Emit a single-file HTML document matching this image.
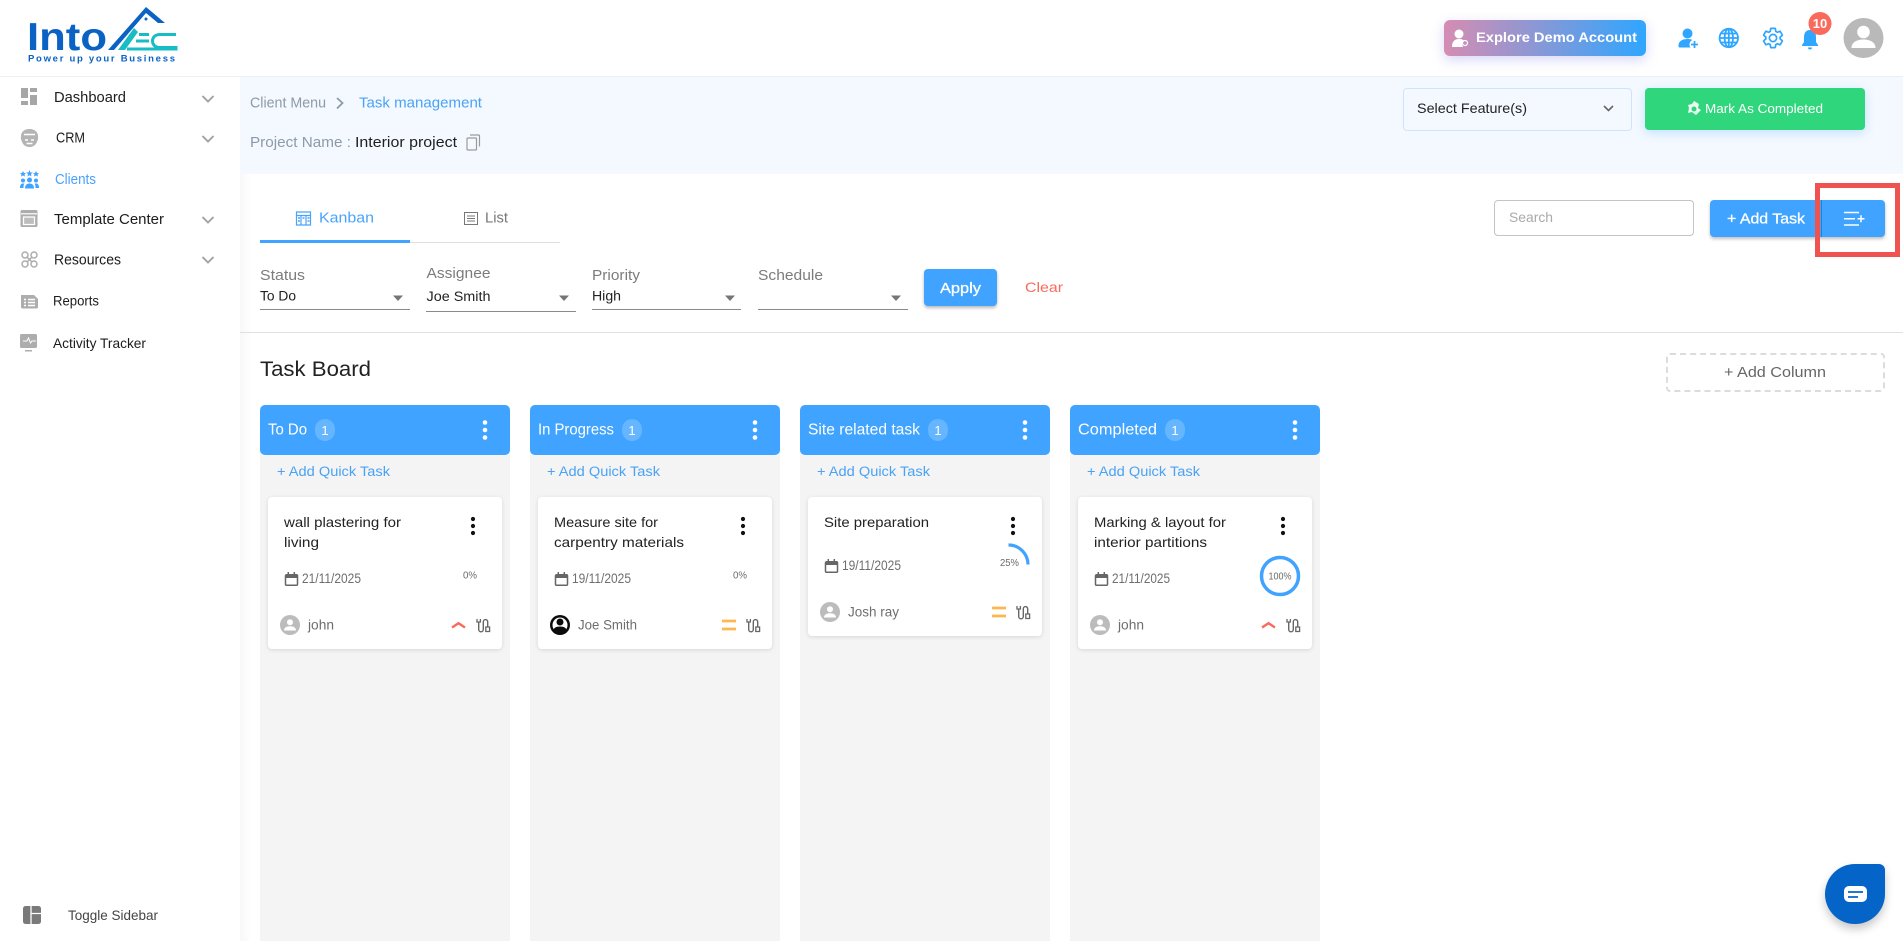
<!DOCTYPE html>
<html lang="en">
<head>
<meta charset="utf-8">
<title>Task management</title>
<style>
html,body{margin:0;padding:0;width:1903px;height:941px;overflow:hidden;background:#fff;font-family:"Liberation Sans",sans-serif}
.b{position:absolute;box-sizing:border-box}
svg.o{position:absolute;left:0;top:0}
text{font-family:"Liberation Sans",sans-serif}
.m{font-size:15px;fill:#1c1c1c}
.lb{font-size:14.5px;fill:#7c7c7c}
.v{font-size:13.5px;fill:#222}
.h{font-size:15.5px;fill:#fff}
.q{font-size:13.5px;fill:#4aa2f5}
.t{font-size:14px;fill:#222}
.d{font-size:13.5px;fill:#6e6e6e}
.n{font-size:13.5px;fill:#6e6e6e}
.p{font-size:10px;fill:#6a6a6a}
</style>
</head>
<body>
<div class="b" style="left:0;top:76px;width:1903px;height:1px;background:#ecf0f4"></div>
<div class="b" style="left:240px;top:77px;width:1663px;height:97px;background:#f4f9ff"></div>
<div class="b" style="left:240px;top:174px;width:12px;height:767px;background:linear-gradient(90deg,#f8f8f8,#fff)"></div>

<div class="b" style="left:1444px;top:20px;width:202px;height:36px;border-radius:6px;background:linear-gradient(90deg,#d68cb2,#2fa6ff);box-shadow:0 4px 12px rgba(110,110,230,.28)"></div>
<div class="b" style="left:1403px;top:88px;width:229px;height:43px;border:1px solid #cfe3fa;border-radius:4px"></div>
<div class="b" style="left:1645px;top:88px;width:220px;height:42px;border-radius:4px;background:#2fd67c;box-shadow:0 3px 10px rgba(80,170,255,.3)"></div>

<div class="b" style="left:1494px;top:200px;width:200px;height:36px;border:1px solid #c4c4c4;border-radius:4px;background:#fff"></div>
<div class="b" style="left:1710px;top:200px;width:175px;height:37px;border-radius:4px;background:#3fa3ff;box-shadow:0 2px 3px rgba(0,0,0,.25)"></div>
<div class="b" style="left:1821px;top:200px;width:1px;height:37px;background:#2f7fd0"></div>
<div class="b" style="left:1815px;top:183px;width:85px;height:74px;border:5px solid #ef5350"></div>

<div class="b" style="left:260px;top:240px;width:150px;height:2.5px;background:#3fa3ff"></div>
<div class="b" style="left:410px;top:241.5px;width:150px;height:1px;background:#e0e0e0"></div>
<div class="b" style="left:260px;top:309px;width:150px;height:1px;background:#8a8a8a"></div>
<div class="b" style="left:426px;top:311px;width:150px;height:1px;background:#8a8a8a"></div>
<div class="b" style="left:592px;top:309px;width:149px;height:1px;background:#8a8a8a"></div>
<div class="b" style="left:758px;top:309px;width:150px;height:1px;background:#8a8a8a"></div>
<div class="b" style="left:924px;top:269px;width:73px;height:37px;border-radius:4px;background:#3fa3ff;box-shadow:0 2px 3px rgba(0,0,0,.28)"></div>
<div class="b" style="left:240px;top:332px;width:1663px;height:1px;background:#e0e0e0"></div>
<div class="b" style="left:1666px;top:353px;width:219px;height:39px;border:2px dashed #dcdcdc;border-radius:4px"></div>

<div class="b" style="left:260px;top:450px;width:250px;height:491px;background:#f4f4f4"></div>
<div class="b" style="left:530px;top:450px;width:250px;height:491px;background:#f4f4f4"></div>
<div class="b" style="left:800px;top:450px;width:250px;height:491px;background:#f4f4f4"></div>
<div class="b" style="left:1070px;top:450px;width:250px;height:491px;background:#f4f4f4"></div>
<div class="b" style="left:260px;top:405px;width:250px;height:50px;background:#3fa3ff;border-radius:5px"></div>
<div class="b" style="left:530px;top:405px;width:250px;height:50px;background:#3fa3ff;border-radius:5px"></div>
<div class="b" style="left:800px;top:405px;width:250px;height:50px;background:#3fa3ff;border-radius:5px"></div>
<div class="b" style="left:1070px;top:405px;width:250px;height:50px;background:#3fa3ff;border-radius:5px"></div>

<div class="b" style="left:268px;top:497px;width:234px;height:152px;background:#fff;border-radius:4px;box-shadow:0 1px 4px rgba(0,0,0,.12)"></div>
<div class="b" style="left:538px;top:497px;width:234px;height:152px;background:#fff;border-radius:4px;box-shadow:0 1px 4px rgba(0,0,0,.12)"></div>
<div class="b" style="left:808px;top:497px;width:234px;height:139px;background:#fff;border-radius:4px;box-shadow:0 1px 4px rgba(0,0,0,.12)"></div>
<div class="b" style="left:1078px;top:497px;width:234px;height:152px;background:#fff;border-radius:4px;box-shadow:0 1px 4px rgba(0,0,0,.12)"></div>

<div class="b" style="left:1825px;top:864px;width:60px;height:60px;background:#0464c8;border-radius:30px 6px 30px 30px;box-shadow:0 5px 9px rgba(0,0,0,.22)"></div>

<svg class="o" width="1903" height="941" viewBox="0 0 1903 941" xmlns="http://www.w3.org/2000/svg">
<defs>
<g id="chev"><path d="M-5.500-3 0 2.500 5.500-3" fill="none" stroke="#a2a2a2" stroke-width="1.900"/></g>
<g id="tri"><path d="M-5-2.500H5L0 3z" fill="#757575"/></g>
<g id="kdots"><circle cy="-7" r="2.100" fill="#111"/><circle cy="0" r="2.100" fill="#111"/><circle cy="7" r="2.100" fill="#111"/></g>
<g id="wdots"><circle cy="-7.500" r="2.300" fill="#fff"/><circle cy="0" r="2.300" fill="#fff"/><circle cy="7.500" r="2.300" fill="#fff"/></g>
<g id="cal"><path d="M1 2.500h10a1 1 0 0 1 1 1v8.500a1 1 0 0 1-1 1H1a1 1 0 0 1-1-1V3.500a1 1 0 0 1 1-1z" transform="translate(.5,.3)" fill="none" stroke="#666" stroke-width="1.500"/><path d="M.5 3h11.500v3H.5z" fill="#666"/><path d="M3.300 0v3M9.300 0v3" stroke="#666" stroke-width="1.500"/></g>
<g id="av"><circle r="10" fill="#bcbcbc"/><circle cy="-2.800" r="3" fill="#fff"/><path d="M-6 5.500c0-3 3-4.200 6-4.200s6 1.200 6 4.200z" fill="#fff"/></g>
<g id="up"><path d="M-6.500 2.500 0-1.800 6.500 2.500" fill="none" stroke="#f96a5c" stroke-width="2.400"/></g>
<g id="eq"><path d="M-7-4H7M-7 4H7" stroke="#ffb74d" stroke-width="2.700"/></g>
<g id="sw"><path d="M2.200 3v7.500a2.300 2.300 0 0 0 4.600 0V2.800a2.200 2.200 0 0 1 4.400 0V8" fill="none" stroke="#666" stroke-width="1.400"/><path d="M.5 0v3h3.400V0M9.300 8h3.800v4.500H9.300z" fill="none" stroke="#666" stroke-width="1.300"/></g>
</defs>

<!-- logo -->
<text x="27" y="50" textLength="80" lengthAdjust="spacingAndGlyphs" font-size="39" font-weight="700" fill="#0a62c4">Into</text>
<path d="M108 50 146 7l19 16h-7L146 13l-32 37z" fill="#0a62c4"/>
<path d="M118 50l16-22 4 4-13 18z" fill="#18bcc4"/>
<g fill="none" stroke="#18bcc4" stroke-width="3"><path d="M176 34.500H160c-5 0-7.500 3-7.500 6.500s2.500 6.500 7.500 6.500h16V49H127"/><path d="M136 41h13M139 34.500h10"/></g>
<circle cx="146" cy="19" r="1.500" fill="#0a62c4"/>
<text x="28" y="61.500" textLength="147" lengthAdjust="spacing" font-size="9.500" font-weight="700" fill="#0a62c4">Power up your Business</text>

<!-- side menu -->
<g fill="#a6a6a6">
<path d="M21 88h7v10h-7zM21 101h7v4h-7zM30 88h7v4h-7zM30 95h7v10h-7z"/>
</g>
<!-- CRM face -->
<path d="M29.500 129c-5 0-8.500 3-8.500 7 0 1.500-.5 3 .5 4.500 1 3.500 3.500 6.500 8 6.500s7-3 8-6.500c1-1.500.5-3 .5-4.500 0-4-3.500-7-8.500-7z" fill="#b4b4b4"/>
<path d="M24 134.500h11M25 140h3M31 140h3M26.500 143.500h6" stroke="#fff" stroke-width="1.400" fill="none"/>
<g fill="#3fa3ff">
<path d="M23 171l1 2h2l-1.500 1.500.5 2-2-1-2 1 .5-2L20 173h2zM29.500 170l1 2.500h2.500l-2 1.500.5 2.500-2-1.300-2 1.300.5-2.500-2-1.500h2.500zM36 171l1 2h2l-1.500 1.500.5 2-2-1-2 1 .5-2L33 173h2z"/>
<circle cx="23" cy="180.500" r="2"/><circle cx="29.500" cy="180" r="2.500"/><circle cx="36" cy="180.500" r="2"/>
<path d="M20 188c0-3 1-4.500 3-4.500h1.500c-1 1-1 3-1 4.500zM39 188c0-3-1-4.500-3-4.500h-1.500c1 1 1 3 1 4.500zM25 188.500c0-3 1.500-5 4.500-5s4.500 2 4.500 5z"/>
</g>
<g fill="#adadad">
<rect x="20.500" y="210" width="17" height="17" rx="1.500"/>
<path d="M21 295h13l4 4v8a1.500 1.500 0 0 1-1.500 1.500H22.500A1.500 1.500 0 0 1 21 307z"/>
<rect x="20" y="334" width="17" height="14" rx="1.500"/>
<rect x="25" y="350" width="7" height="1.500"/>
</g>
<path d="M21 213.800h16" stroke="#fff" stroke-width="1.200"/>
<rect x="23.500" y="217" width="11" height="7.500" fill="#bdbdbd" stroke="#fff" stroke-width="1.300"/>
<path d="M24 300h2M28 300h7M24 303h2M28 303h7M24 306h2M28 306h7" stroke="#fff" stroke-width="1.500" transform="translate(0,-.5)"/>
<path d="M23 341h4l1.500-3 2 5 1.500-2h4" fill="none" stroke="#fff" stroke-width="1"/>
<g fill="none" stroke="#adadad" stroke-width="1.500">
<circle cx="25" cy="255" r="3"/><circle cx="34" cy="255" r="3"/><circle cx="25" cy="264" r="3"/><circle cx="34" cy="264" r="3"/>
<path d="M27 257l5 5M32 257l-5 5"/>
</g>

<text class="m" x="54" y="102" textLength="72" lengthAdjust="spacingAndGlyphs">Dashboard</text>
<text class="m" x="56" y="142.500" textLength="29" lengthAdjust="spacingAndGlyphs">CRM</text>
<text class="m" x="55" y="184" textLength="41" lengthAdjust="spacingAndGlyphs" style="fill:#4aa3fb">Clients</text>
<text class="m" x="54" y="224" textLength="110" lengthAdjust="spacingAndGlyphs">Template Center</text>
<text class="m" x="54" y="264.500" textLength="67" lengthAdjust="spacingAndGlyphs">Resources</text>
<text class="m" x="53" y="305.500" textLength="46" lengthAdjust="spacingAndGlyphs" style="font-size:14px">Reports</text>
<text class="m" x="53" y="348" textLength="93" lengthAdjust="spacingAndGlyphs" style="font-size:14px">Activity Tracker</text>
<use href="#chev" x="208" y="99"/><use href="#chev" x="208" y="139"/><use href="#chev" x="208" y="220"/><use href="#chev" x="208" y="260"/>

<rect x="23" y="906" width="18" height="18" rx="2.500" fill="#7a7a7a"/>
<path d="M31 906v18M31 913.500h10" stroke="#fff" stroke-width="1.300"/>
<text x="68" y="920" font-size="14" fill="#444" textLength="90" lengthAdjust="spacingAndGlyphs">Toggle Sidebar</text>

<!-- breadcrumb -->
<text x="250" y="107.500" font-size="14.500" fill="#8d9aa8" textLength="76" lengthAdjust="spacingAndGlyphs">Client Menu</text>
<path d="M337 98l5.500 5-5.500 5.500" fill="none" stroke="#8d9aa8" stroke-width="1.800"/>
<text x="359" y="107.500" font-size="14.500" fill="#4aa2f5" textLength="123" lengthAdjust="spacingAndGlyphs">Task management</text>
<text x="250" y="147" font-size="15" fill="#8d9aa8" textLength="101" lengthAdjust="spacingAndGlyphs">Project Name :</text>
<text x="355" y="147" font-size="15" fill="#1f1f1f" textLength="102" lengthAdjust="spacingAndGlyphs">Interior project</text>
<path d="M468 138h7.500a1 1 0 0 1 1 1v10a1 1 0 0 1-1 1H468a1 1 0 0 1-1-1v-10a1 1 0 0 1 1-1zM470 135h8.500a1 1 0 0 1 1 1v10.500" fill="none" stroke="#9a9a9a" stroke-width="1.200"/>

<!-- top right -->
<circle cx="1459" cy="34" r="4.500" fill="#fff"/><path d="M1452 47c0-6 3-8 7-8 3 0 4 .5 5 2l-2 3 1 3z" fill="#fff"/><circle cx="1465" cy="43" r="2.500" fill="none" stroke="#fff" stroke-width="1.200"/>
<text x="1476" y="42" font-size="13.500" font-weight="700" fill="#fff" textLength="161" lengthAdjust="spacingAndGlyphs">Explore Demo Account</text>

<circle cx="1687.500" cy="33.500" r="5" fill="#2fa6ff"/><path d="M1680 47.500c-1.500 0-1.500-1-1.500-2 0-4.500 4-6.500 9-6.500 2 0 3.500.3 5 1-2 .8-3 2.600-3 4.500 0 1 .3 2 1 3z" fill="#2fa6ff"/><path d="M1691 44.500h7M1694.500 41v7" stroke="#2fa6ff" stroke-width="1.800"/>
<g fill="none" stroke="#2fa6ff" stroke-width="1.800"><circle cx="1728.800" cy="38" r="9.200"/><ellipse cx="1728.800" cy="38" rx="4.200" ry="9.200"/><path d="M1719.500 38h18.600M1720.800 33.500h16M1720.800 42.500h16M1728.800 29v18"/></g>
<path transform="translate(1761,26)" fill="none" stroke="#2fa6ff" stroke-width="1.700" d="M19.140 12.940c.04-.3.06-.61.06-.94 0-.32-.02-.64-.07-.94l2.030-1.580c.18-.14.23-.41.12-.61l-1.920-3.320c-.12-.22-.37-.29-.59-.22l-2.390.96c-.5-.38-1.030-.7-1.620-.94l-.36-2.540c-.04-.24-.24-.41-.48-.41h-3.840c-.24 0-.43.17-.47.41l-.36 2.540c-.59.24-1.130.57-1.620.94l-2.390-.96c-.22-.08-.47 0-.59.22L2.740 8.870c-.12.21-.08.47.12.61l2.030 1.580c-.05.3-.09.63-.09.94s.02.64.07.94l-2.030 1.580c-.18.14-.23.41-.12.61l1.920 3.320c.12.22.37.29.59.22l2.390-.96c.5.38 1.030.7 1.620.94l.36 2.540c.05.24.24.41.48.41h3.840c.24 0 .44-.17.47-.41l.36-2.540c.59-.24 1.130-.56 1.620-.94l2.390.96c.22.08.47 0 .59-.22l1.920-3.320c.12-.22.07-.47-.12-.61l-2.010-1.580zM12 15.600c-1.980 0-3.600-1.620-3.600-3.600s1.620-3.600 3.600-3.600 3.600 1.620 3.600 3.600-1.620 3.600-3.600 3.600z"/>
<path d="M1810 30c-4 0-6 3-6 7v5l-2 3v1h16v-1l-2-3v-5c0-4-2-7-6-7zM1808 47.500h4a2 2 0 0 1-4 0z" fill="#2fa6ff"/>
<circle cx="1820" cy="23.500" r="11.500" fill="#f96a5c"/>
<text x="1820" y="28" font-size="13" font-weight="700" fill="#fff" text-anchor="middle">10</text>
<circle cx="1863.500" cy="38" r="20" fill="#b9b9b9"/><circle cx="1863.500" cy="32" r="6.300" fill="#fff"/><path d="M1851.500 48c0-6 6-8.500 12-8.500s12 2.500 12 8.500z" fill="#fff"/>

<text x="1417" y="113" font-size="14" fill="#222" textLength="110" lengthAdjust="spacingAndGlyphs">Select Feature(s)</text>
<path d="M1604 106l4.500 4.500 4.500-4.500" fill="none" stroke="#666" stroke-width="1.600"/>
<path d="M1694 101l5 3-1 4 3 2-5 5-4-3-4 1 1-5-1-3 4-1z" fill="#fff" opacity=".9"/>
<circle cx="1694" cy="109" r="2.500" fill="#2fd67c"/>
<text x="1705" y="113" font-size="12.500" fill="#fff" textLength="118" lengthAdjust="spacingAndGlyphs">Mark As Completed</text>

<text x="1509" y="222" font-size="14" fill="#aaa" textLength="44" lengthAdjust="spacingAndGlyphs">Search</text>
<text x="1727" y="223.500" font-size="15" fill="#fff" stroke="#fff" stroke-width=".3" textLength="78" lengthAdjust="spacingAndGlyphs">+ Add Task</text>
<path d="M1844 212.500h15M1844 218.800h11M1844 225h15M1857.500 218.800h7M1861 215.300v7" stroke="#fff" stroke-width="1.500"/>

<!-- tabs -->
<path d="M296.500 212h14v13h-14zM296.500 215.500h14M301 215.500V225M306 215.500V225" fill="none" stroke="#4aa3fb" stroke-width="1.200"/>
<path d="M298 218h2M298 221h2M302.500 218h2M307.500 218h2M307.500 221h2" stroke="#4aa3fb" stroke-width="1.500"/>
<text x="319" y="222.500" font-size="14.500" fill="#4aa3fb" textLength="55" lengthAdjust="spacingAndGlyphs">Kanban</text>
<path d="M464.500 212.500h13v12h-13zM467 216h8M467 218.500h8M467 221h8" fill="none" stroke="#777" stroke-width="1"/>
<text x="485" y="222.500" font-size="14.500" fill="#777" textLength="23" lengthAdjust="spacingAndGlyphs">List</text>

<!-- filters -->
<text class="lb" x="260" y="280" textLength="45" lengthAdjust="spacingAndGlyphs">Status</text>
<text class="v" x="260" y="300.500" textLength="36" lengthAdjust="spacingAndGlyphs">To Do</text>
<use href="#tri" x="398" y="298"/>
<text class="lb" x="426.500" y="278" textLength="64" lengthAdjust="spacingAndGlyphs">Assignee</text>
<text class="v" x="426.500" y="301" textLength="64" lengthAdjust="spacingAndGlyphs">Joe Smith</text>
<use href="#tri" x="564" y="298"/>
<text class="lb" x="592" y="280" textLength="48" lengthAdjust="spacingAndGlyphs">Priority</text>
<text class="v" x="592" y="300.500" textLength="29" lengthAdjust="spacingAndGlyphs">High</text>
<use href="#tri" x="730" y="298"/>
<text class="lb" x="758" y="280" textLength="65" lengthAdjust="spacingAndGlyphs">Schedule</text>
<use href="#tri" x="896" y="298"/>
<text x="940" y="293" font-size="14.500" fill="#fff" stroke="#fff" stroke-width=".3" textLength="41" lengthAdjust="spacingAndGlyphs">Apply</text>
<text x="1025" y="292" font-size="14" fill="#f96a5c" textLength="38" lengthAdjust="spacingAndGlyphs">Clear</text>

<text x="260" y="376" font-size="21" fill="#222" textLength="111" lengthAdjust="spacingAndGlyphs">Task Board</text>
<text x="1724" y="377" font-size="14.500" fill="#666" textLength="102" lengthAdjust="spacingAndGlyphs">+ Add Column</text>

<!-- column headers -->
<g fill="#fff" fill-opacity=".2"><rect x="315" y="419" width="20" height="22" rx="10"/><rect x="622" y="419" width="20" height="22" rx="10"/><rect x="928" y="419" width="20" height="22" rx="10"/><rect x="1165" y="419" width="20" height="22" rx="10"/></g>
<text class="h" x="268" y="434.500" textLength="39" lengthAdjust="spacingAndGlyphs">To Do</text>
<text class="h" x="538" y="434.500" textLength="76" lengthAdjust="spacingAndGlyphs">In Progress</text>
<text class="h" x="808" y="434.500" textLength="112" lengthAdjust="spacingAndGlyphs">Site related task</text>
<text class="h" x="1078" y="434.500" textLength="79" lengthAdjust="spacingAndGlyphs">Completed</text>
<g font-size="13" fill="#fff" text-anchor="middle"><text x="325" y="435">1</text><text x="632" y="435">1</text><text x="938" y="435">1</text><text x="1175" y="435">1</text></g>
<use href="#wdots" x="485" y="430"/><use href="#wdots" x="755" y="430"/><use href="#wdots" x="1025" y="430"/><use href="#wdots" x="1295" y="430"/>

<text class="q" x="277" y="476" textLength="113" lengthAdjust="spacingAndGlyphs">+ Add Quick Task</text>
<text class="q" x="547" y="476" textLength="113" lengthAdjust="spacingAndGlyphs">+ Add Quick Task</text>
<text class="q" x="817" y="476" textLength="113" lengthAdjust="spacingAndGlyphs">+ Add Quick Task</text>
<text class="q" x="1087" y="476" textLength="113" lengthAdjust="spacingAndGlyphs">+ Add Quick Task</text>

<!-- card 1 -->
<text class="t" x="284" y="527" textLength="117" lengthAdjust="spacingAndGlyphs">wall plastering for</text>
<text class="t" x="284" y="547" textLength="35" lengthAdjust="spacingAndGlyphs">living</text>
<use href="#kdots" x="473" y="526"/>
<use href="#cal" x="285" y="572"/>
<text class="d" x="302" y="583" textLength="59" lengthAdjust="spacingAndGlyphs">21/11/2025</text>
<text class="p" x="463" y="578.500" textLength="14" lengthAdjust="spacingAndGlyphs">0%</text>
<use href="#av" x="290" y="625"/>
<text class="n" x="308" y="629.500" textLength="26" lengthAdjust="spacingAndGlyphs">john</text>
<use href="#up" x="458.500" y="625"/>
<use href="#sw" x="476.500" y="619"/>

<!-- card 2 -->
<text class="t" x="554" y="527" textLength="104" lengthAdjust="spacingAndGlyphs">Measure site for</text>
<text class="t" x="554" y="547" textLength="130" lengthAdjust="spacingAndGlyphs">carpentry materials</text>
<use href="#kdots" x="743" y="526"/>
<use href="#cal" x="555" y="572"/>
<text class="d" x="572" y="583" textLength="59" lengthAdjust="spacingAndGlyphs">19/11/2025</text>
<text class="p" x="733" y="578.500" textLength="14" lengthAdjust="spacingAndGlyphs">0%</text>
<circle cx="560" cy="625" r="10" fill="#0b0b0b"/><circle cx="560" cy="625" r="7.500" fill="#fff"/><circle cx="560" cy="622" r="3.500" fill="#0b0b0b"/><path d="M553 632c0-4 3-5.500 7-5.500s7 1.500 7 5.500l-5 2h-4z" fill="#0b0b0b"/>
<text class="n" x="578" y="629.500" textLength="59" lengthAdjust="spacingAndGlyphs">Joe Smith</text>
<use href="#eq" x="729" y="625"/>
<use href="#sw" x="746.500" y="619"/>

<!-- card 3 -->
<text class="t" x="824" y="527" textLength="105" lengthAdjust="spacingAndGlyphs">Site preparation</text>
<use href="#kdots" x="1013" y="526"/>
<use href="#cal" x="825" y="559"/>
<text class="d" x="842" y="570" textLength="59" lengthAdjust="spacingAndGlyphs">19/11/2025</text>
<path d="M1008.500 545a19.500 19.500 0 0 1 19.500 19.500" fill="none" stroke="#3fa3ff" stroke-width="3.200"/>
<text class="p" x="1000" y="566" textLength="19" lengthAdjust="spacingAndGlyphs">25%</text>
<use href="#av" x="830" y="612"/>
<text class="n" x="848" y="616.500" textLength="51" lengthAdjust="spacingAndGlyphs">Josh ray</text>
<use href="#eq" x="999" y="612"/>
<use href="#sw" x="1016.500" y="606"/>

<!-- card 4 -->
<text class="t" x="1094" y="527" textLength="132" lengthAdjust="spacingAndGlyphs">Marking &amp; layout for</text>
<text class="t" x="1094" y="547" textLength="113" lengthAdjust="spacingAndGlyphs">interior partitions</text>
<use href="#kdots" x="1283" y="526"/>
<use href="#cal" x="1095" y="572"/>
<text class="d" x="1112" y="583" textLength="58" lengthAdjust="spacingAndGlyphs">21/11/2025</text>
<circle cx="1280" cy="576" r="18.500" fill="none" stroke="#3fa3ff" stroke-width="3.500"/>
<text class="p" x="1268.500" y="579.500" textLength="23" lengthAdjust="spacingAndGlyphs">100%</text>
<use href="#av" x="1100" y="625"/>
<text class="n" x="1118" y="629.500" textLength="26" lengthAdjust="spacingAndGlyphs">john</text>
<use href="#up" x="1268.500" y="625"/>
<use href="#sw" x="1286.500" y="619"/>

<!-- chat -->
<rect x="1844" y="886" width="23" height="16" rx="5" fill="#fff"/>
<path d="M1848 892h15M1848 897h10" stroke="#0464c8" stroke-width="1.700"/>
</svg>
</body>
</html>
